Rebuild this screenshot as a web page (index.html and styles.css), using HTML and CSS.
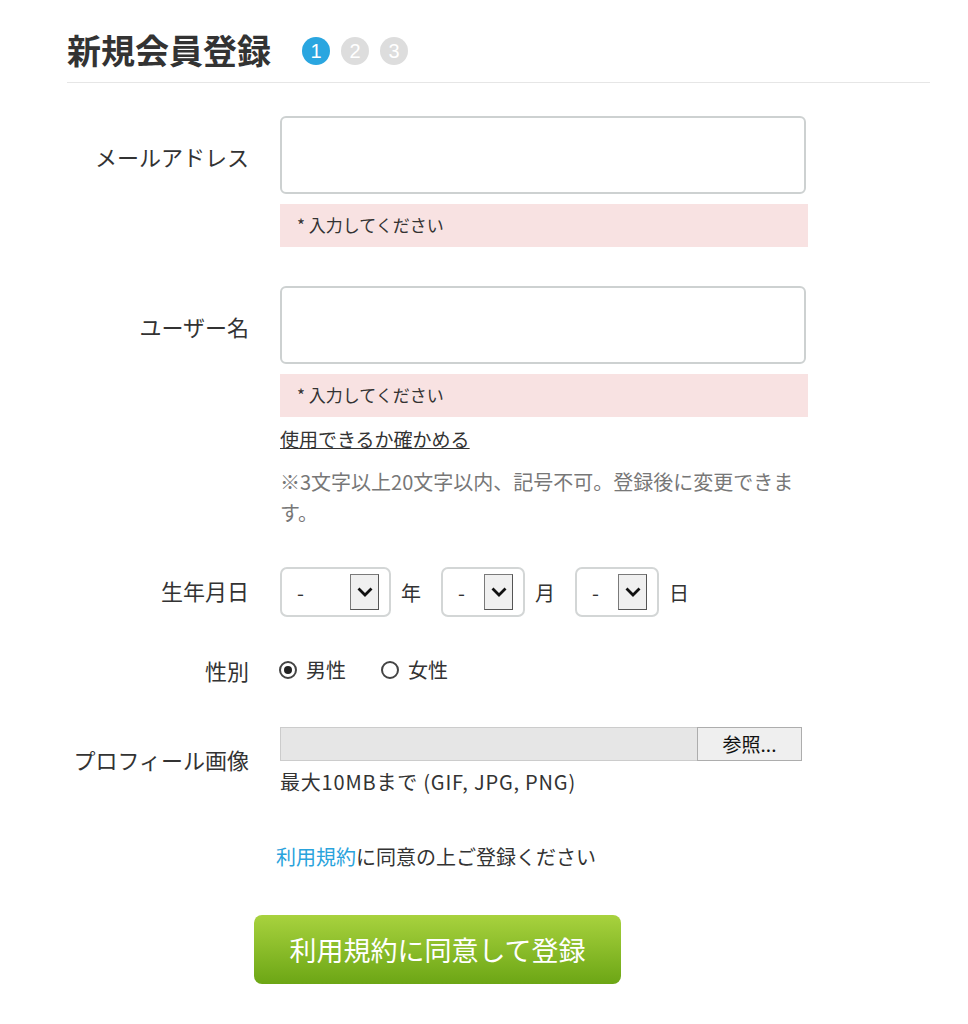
FILE: index.html
```html
<!DOCTYPE html>
<html lang="ja">
<head>
  <meta charset="utf-8">
  <title>新規会員登録</title>
  <link rel="stylesheet" href="styles.css">
</head>
<body>

<div class="page">
  <div class="page-head">
    <h1 class="page-title">新規会員登録</h1>
    <ol class="steps">
      <li class="step is-current">1</li>
      <li class="step">2</li>
      <li class="step">3</li>
    </ol>
  </div>

  <form class="signup">
    <div class="form-row row-input">
      <label class="form-label">メールアドレス</label>
      <div class="form-field">
        <input type="text" class="text-input">
        <p class="error-box">* 入力してください</p>
      </div>
    </div>

    <div class="form-row row-input">
      <label class="form-label">ユーザー名</label>
      <div class="form-field">
        <input type="text" class="text-input">
        <p class="error-box">* 入力してください</p>
        <a href="#" class="check-link">使用できるか確かめる</a>
        <p class="field-note">※3文字以上20文字以内、記号不可。登録後に変更できます。</p>
      </div>
    </div>

    <div class="form-row row-birth">
      <label class="form-label">生年月日</label>
      <div class="form-field date-fields">
        <div class="select select-year">
          <span class="select-value">-</span>
          <span class="select-arrow"><svg width="16" height="10" viewBox="0 0 16 10"><path d="M1.5 1.5l6.5 6.5 6.5-6.5" fill="none" stroke="#111" stroke-width="2.8"/></svg></span>
        </div>
        <span class="date-unit">年</span>
        <div class="select select-small">
          <span class="select-value">-</span>
          <span class="select-arrow"><svg width="16" height="10" viewBox="0 0 16 10"><path d="M1.5 1.5l6.5 6.5 6.5-6.5" fill="none" stroke="#111" stroke-width="2.8"/></svg></span>
        </div>
        <span class="date-unit">月</span>
        <div class="select select-small">
          <span class="select-value">-</span>
          <span class="select-arrow"><svg width="16" height="10" viewBox="0 0 16 10"><path d="M1.5 1.5l6.5 6.5 6.5-6.5" fill="none" stroke="#111" stroke-width="2.8"/></svg></span>
        </div>
        <span class="date-unit">日</span>
      </div>
    </div>

    <div class="form-row row-gender">
      <label class="form-label">性別</label>
      <div class="form-field radios">
        <span class="radio is-checked"><span class="radio-mark"></span>男性</span>
        <span class="radio"><span class="radio-mark"></span>女性</span>
      </div>
    </div>

    <div class="form-row row-file">
      <label class="form-label">プロフィール画像</label>
      <div class="form-field">
        <div class="file-input">
          <span class="file-name"></span>
          <span class="file-button">参照...</span>
        </div>
        <p class="file-note">最大10MBまで (GIF, JPG, PNG)</p>
      </div>
    </div>

    <p class="terms"><a href="#">利用規約</a>に同意の上ご登録ください</p>

    <button type="submit" class="submit-btn">利用規約に同意して登録</button>
  </form>
</div>

</body>
</html>
```

FILE: styles.css
```css
body {
  margin: 0;
  font-family: "Noto Sans CJK JP", "Noto Sans", sans-serif;
  color: #333;
  background: #fff;
}
.page {
  width: 863px;
  padding: 30px 0 0 67px;
}

/* heading with step markers */
.page-head {
  display: flex;
  align-items: center;
  padding-bottom: 12px;
  border-bottom: 1px solid #e6e6e6;
}
.page-title {
  margin: 0;
  font-size: 34px;
  line-height: 40px;
  font-weight: bold;
  color: #333;
}
.steps {
  display: flex;
  gap: 11px;
  margin: 2px 0 0 31px;
  padding: 0;
  list-style: none;
}
.step {
  width: 28px;
  height: 28px;
  border-radius: 50%;
  background: #dddddd;
  color: #fff;
  font-family: "Liberation Sans", Arial, sans-serif;
  font-size: 20px;
  line-height: 28px;
  text-align: center;
}
.step.is-current {
  background: #2aa6e0;
}

/* form rows */
.signup {
  margin-top: 33px;
}
.form-row {
  display: grid;
  grid-template-columns: 182px 528px;
  column-gap: 31px;
}
.form-label {
  text-align: right;
  font-size: 22px;
  line-height: 30px;
  color: #333;
}
.row-input .form-label {
  padding-top: 25px;
}
.row-input + .row-input {
  margin-top: 39px;
}
.text-input {
  display: block;
  box-sizing: border-box;
  width: 526px;
  height: 78px;
  margin: 0;
  border: 2px solid #cdd1d1;
  border-radius: 6px;
  background: #fff;
}
.error-box {
  margin: 10px 0 0;
  height: 43px;
  padding-left: 17px;
  background: #f8e2e2;
  font-size: 17px;
  line-height: 41px;
  color: #333;
}
.check-link {
  display: inline-block;
  margin-top: 10px;
  font-size: 19px;
  line-height: 24px;
  color: #333;
  text-decoration: underline;
}
.field-note {
  margin: 14px 0 0;
  width: 526px;
  font-size: 20px;
  line-height: 31px;
  color: #777;
}

/* birthday selects */
.row-birth {
  margin-top: 39px;
}
.row-birth .form-label {
  padding-top: 8px;
}
.date-fields {
  display: flex;
  align-items: center;
}
.select {
  box-sizing: border-box;
  display: flex;
  align-items: center;
  justify-content: space-between;
  height: 50px;
  padding: 0 10px 0 15px;
  border: 2px solid #d3d6d6;
  border-radius: 7px;
  margin-right: 10px;
}
.select-year {
  width: 111px;
}
.select-small {
  width: 84px;
}
.select-value {
  font-size: 20px;
  color: #333;
}
.select-arrow {
  box-sizing: border-box;
  display: flex;
  align-items: center;
  justify-content: center;
  width: 29px;
  height: 36px;
  background: #f0f0f0;
  border: 1px solid #7a7a7a;
  border-right-color: #555;
  border-bottom-color: #555;
}
.date-unit {
  font-size: 20px;
  margin-right: 20px;
}

/* gender radios */
.row-gender {
  margin-top: 38px;
}
.radios {
  display: flex;
  align-items: center;
  gap: 36px;
  font-size: 20px;
  line-height: 30px;
}
.radio {
  display: flex;
  align-items: center;
  gap: 9px;
}
.radio-mark {
  box-sizing: border-box;
  width: 18px;
  height: 18px;
  margin-left: -1px;
  border: 2px solid #444;
  border-radius: 50%;
  display: flex;
  align-items: center;
  justify-content: center;
}
.radio.is-checked .radio-mark::after {
  content: "";
  width: 8px;
  height: 8px;
  border-radius: 50%;
  background: #222;
}

/* profile image */
.row-file {
  margin-top: 42px;
  align-items: center;
}
.row-file .form-label {
  padding-bottom: 6px;
}
.file-input {
  display: flex;
  width: 522px;
  height: 34px;
  box-sizing: border-box;
  background: #e6e6e6;
  border: 1px solid #cccccc;
}
.file-name {
  flex: 1;
}
.file-button {
  box-sizing: border-box;
  width: 105px;
  margin: -1px -1px -1px 0;
  border: 1px solid #adadad;
  background: #efefef;
  color: #111;
  font-size: 19px;
  line-height: 32px;
  text-align: center;
}
.file-note {
  margin: 6px 0 0;
  font-size: 20px;
  line-height: 30px;
  letter-spacing: 0.8px;
  color: #333;
}

/* terms + submit */
.terms {
  margin: 45px 0 0 209px;
  font-size: 20px;
  line-height: 30px;
  color: #333;
}
.terms a {
  color: #2aa3dc;
  text-decoration: none;
}
.submit-btn {
  display: block;
  width: 367px;
  height: 69px;
  margin: 43px 0 0 187px;
  border: none;
  border-radius: 8px;
  background: linear-gradient(#a8d23e, #6ca615);
  color: #fff;
  font-family: "Noto Sans CJK JP", "Noto Sans", sans-serif;
  font-size: 27px;
  cursor: pointer;
}
```
